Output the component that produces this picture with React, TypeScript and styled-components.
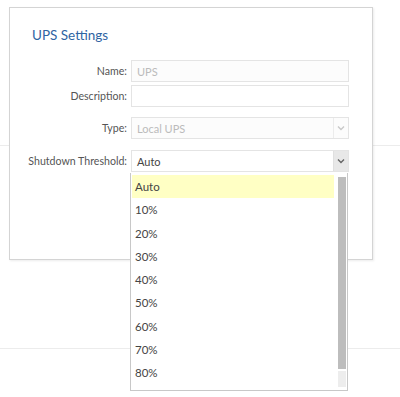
import React from "react";
import styled, { createGlobalStyle } from "styled-components";

const Global = createGlobalStyle`
  html, body { margin: 0; padding: 0; background: #fff; }
  body { font-family: Lato, "Open Sans", sans-serif; color: #555; }
  * { box-sizing: border-box; }
`;

const Page = styled.div`
  position: relative;
  width: 400px;
  height: 397px;
  overflow: hidden;
  display: flex;
  flex-direction: column;
`;

const BgRow = styled.div<{ $h: number }>`
  height: ${(p) => p.$h}px;
  border-bottom: 1px solid #ececec;
`;

const Dialog = styled.div`
  position: absolute;
  left: 9px;
  top: 7px;
  width: 364px;
  height: 253px;
  background: #fff;
  border: 1px solid #d4d4d4;
  box-shadow: 1px 1px 2px rgba(0, 0, 0, 0.08);
  padding: 18px 24px 0 14px;
`;

const Title = styled.h2`
  margin: 0 0 16px 8px;
  font-size: 13.5px;
  font-weight: 400;
  color: #2f64a3;
  line-height: 18px;
`;

const Form = styled.div`
  display: flex;
  flex-direction: column;
`;

const Row = styled.div<{ $mt: number }>`
  display: grid;
  grid-template-columns: 103px 218px;
  column-gap: 4px;
  align-items: center;
  margin-top: ${(p) => p.$mt}px;
`;

const Label = styled.label`
  text-align: right;
  font-size: 10.6px;
  color: #555;
  white-space: nowrap;
`;

const Field = styled.div<{ $disabled?: boolean }>`
  position: relative;
  height: 22px;
  border: 1px solid #e4e4e4;
  background: ${(p) => (p.$disabled ? "#fcfcfc" : "#fff")};
  display: flex;
  align-items: center;
  padding-left: 5px;
  font-size: 11px;
  color: ${(p) => (p.$disabled ? "#bbb" : "#444")};
`;

const ArrowBox = styled.div<{ $active?: boolean }>`
  margin-left: auto;
  width: 15px;
  height: 100%;
  display: flex;
  align-items: center;
  justify-content: center;
  background: ${(p) => (p.$active ? "#e8e8e8" : "transparent")};
  border-left: 1px solid ${(p) => (p.$active ? "#e0e0e0" : "#ececec")};
`;

const DropList = styled.div`
  position: absolute;
  left: 130px;
  top: 173px;
  width: 218px;
  height: 218px;
  background: #fff;
  border: 1px solid #c8c8c8;
  border-top: none;
  display: flex;
  padding: 2px 1px 0 1px;
  gap: 4px;
`;

const Items = styled.div`
  flex: 1;
  overflow: hidden;
`;

const Item = styled.div<{ $hl?: boolean }>`
  height: 23.25px;
  display: flex;
  align-items: center;
  padding-left: 3px;
  font-size: 11.5px;
  color: #444;
  background: ${(p) => (p.$hl ? "#ffffc4" : "transparent")};
`;

const Track = styled.div`
  width: 8px;
  margin: 2px 0 3px 0;
  display: flex;
  flex-direction: column;
`;

const Thumb = styled.div`
  height: 192px;
  background: #bdbdbd;
`;

const TrackRest = styled.div`
  flex: 1;
  background: #ededed;
  margin-top: 2px;
`;

const Chevron = ({ color }: { color: string }) => (
  <svg width="8" height="6" viewBox="0 0 8 6">
    <path d="M1 1.5 L4 4.5 L7 1.5" fill="none" stroke={color} strokeWidth="1.4" />
  </svg>
);

const options = ["Auto", "10%", "20%", "30%", "40%", "50%", "60%", "70%", "80%"];

export default function App() {
  return (
    <>
      <Global />
      <Page>
        <BgRow $h={146} />
        <BgRow $h={203} />
        <Dialog>
          <Title>UPS Settings</Title>
          <Form>
            <Row $mt={0}>
              <Label>Name:</Label>
              <Field $disabled>UPS</Field>
            </Row>
            <Row $mt={3}>
              <Label>Description:</Label>
              <Field />
            </Row>
            <Row $mt={10}>
              <Label>Type:</Label>
              <Field $disabled>
                Local UPS
                <ArrowBox>
                  <Chevron color="#c8c8c8" />
                </ArrowBox>
              </Field>
            </Row>
            <Row $mt={11}>
              <Label>Shutdown Threshold:</Label>
              <Field>
                Auto
                <ArrowBox $active>
                  <Chevron color="#666" />
                </ArrowBox>
              </Field>
            </Row>
          </Form>
        </Dialog>
        <DropList>
          <Items>
            {options.map((o, i) => (
              <Item key={o} $hl={i === 0}>
                {o}
              </Item>
            ))}
          </Items>
          <Track>
            <Thumb />
            <TrackRest />
          </Track>
        </DropList>
      </Page>
    </>
  );
}
